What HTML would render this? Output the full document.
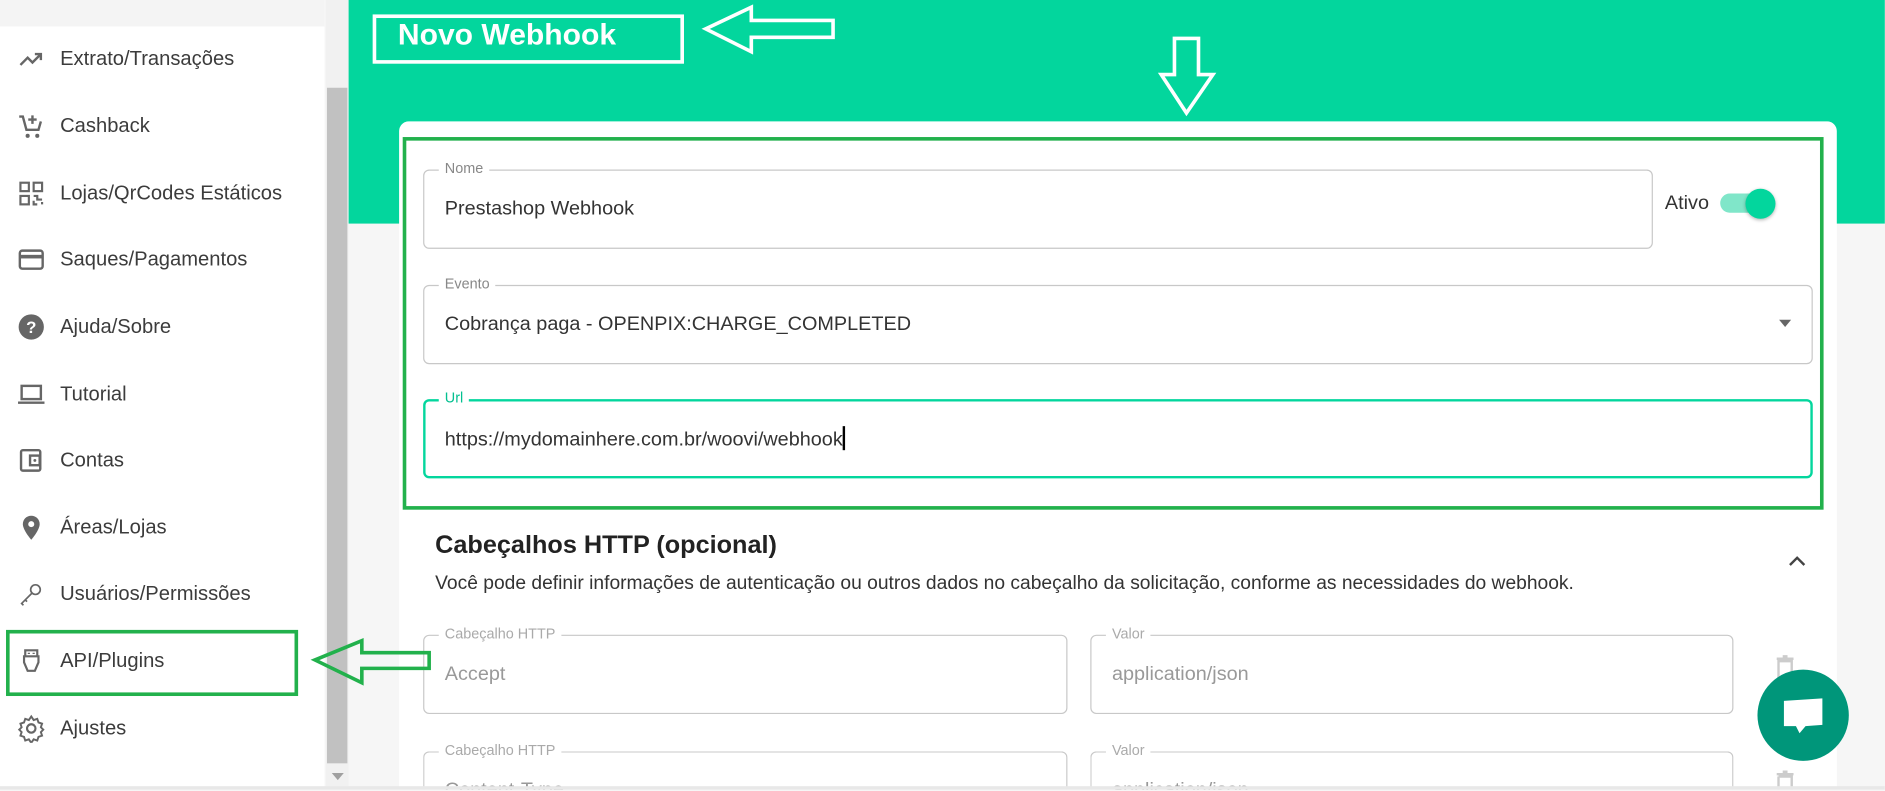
<!DOCTYPE html>
<html><head><meta charset="utf-8"><style>
*{box-sizing:border-box;margin:0;padding:0}
html,body{width:1885px;height:791px;overflow:hidden;background:#f6f6f6;font-family:"Liberation Sans",sans-serif}
#w{position:absolute;left:0;top:0;width:1568px;height:657px;overflow:hidden;transform:scale(1.2021);transform-origin:0 0;background:#f6f6f6}
.a{position:absolute}
.side{left:0;top:0;width:270px;height:657px;background:#fff}
.item{position:absolute;left:50px;font-size:16.8px;color:#3c3c3c;transform:translateY(-50%)}
.ic{position:absolute;left:14px;width:24px;height:24px;transform:translateY(-50%)}
.fld{position:absolute;border:1px solid #c8c8c8;border-radius:5px;background:#fff}
.lab{position:absolute;top:-9px;left:12px;background:#fff;padding:0 5px;font-size:12px;color:#888}
.val{position:absolute;left:17px;top:50%;transform:translateY(-50%);font-size:16.5px;color:#333}
.ph{color:#999}
</style></head><body><div id="w">
<div class="a side"></div>
<div class="a" style="left:0;top:0;width:270px;height:22px;background:#f4f4f4"></div>
<div class="a" style="left:271px;top:0;width:19px;height:654px;background:#f1f1f1"></div>
<div class="a" style="left:272px;top:73px;width:17px;height:562px;background:#c1c1c1"></div>
<div class="a" style="left:276px;top:643px;width:0;height:0;border-left:5px solid transparent;border-right:5px solid transparent;border-top:6px solid #a0a0a0"></div>

<svg class="ic" style="top:49px" viewBox="0 0 24 24"><path d="M3 17l6-6 4 4 7-7M15 8h5v5" fill="none" stroke="#666" stroke-width="2"/></svg>
<svg class="ic" style="top:105px" viewBox="0 0 24 24"><path d="M2 4h3l3 11h10l2-7" fill="none" stroke="#666" stroke-width="2"/><path d="M13 3v7M9.5 6.5h7" stroke="#666" stroke-width="2"/><circle cx="9" cy="20" r="1.7" fill="#666"/><circle cx="17" cy="20" r="1.7" fill="#666"/></svg>
<svg class="ic" style="top:161px" viewBox="0 0 24 24" fill="none" stroke="#666" stroke-width="1.8"><rect x="3" y="3" width="7" height="7"/><rect x="14" y="3" width="7" height="7"/><rect x="3" y="14" width="7" height="7"/><path d="M14 14h3v3h4M14 18v3h3M21 19v2"/></svg>
<svg class="ic" style="top:216px" viewBox="0 0 24 24"><rect x="2.5" y="4.5" width="19" height="15" rx="2" fill="none" stroke="#666" stroke-width="2"/><rect x="3" y="8" width="18" height="3" fill="#666"/></svg>
<svg class="ic" style="top:272px" viewBox="0 0 24 24"><circle cx="12" cy="12" r="10.5" fill="#666"/><text x="12" y="17" font-size="14" font-weight="bold" fill="#fff" text-anchor="middle" font-family="Liberation Sans">?</text></svg>
<svg class="ic" style="top:328px" viewBox="0 0 24 24"><rect x="4" y="5" width="16" height="11" fill="none" stroke="#666" stroke-width="2"/><path d="M1 19h22" stroke="#666" stroke-width="2"/></svg>
<svg class="ic" style="top:383px" viewBox="0 0 24 24"><rect x="3.5" y="3.5" width="16" height="17" rx="1.5" fill="none" stroke="#666" stroke-width="2"/><rect x="11" y="8" width="8" height="8" fill="none" stroke="#666" stroke-width="2"/><circle cx="15" cy="12" r="1.2" fill="#666"/></svg>
<svg class="ic" style="top:439px" viewBox="0 0 24 24"><path d="M12 2a7 7 0 0 0-7 7c0 5 7 13 7 13s7-8 7-13a7 7 0 0 0-7-7z" fill="#666"/><circle cx="12" cy="9" r="2.5" fill="#fff"/></svg>
<svg class="ic" style="top:494px" viewBox="0 0 24 24" fill="none" stroke="#666" stroke-width="1.4"><circle cx="15.5" cy="8.5" r="4"/><path d="M12.5 11.5L4 20l1.5 1.5M7 17l1.5 1.5"/></svg>
<svg class="ic" style="top:550px" viewBox="0 0 24 24" fill="none" stroke="#666" stroke-width="1.8"><path d="M7 3h10v5H7zM6 8h12v5l-3 7H9l-3-7z"/><path d="M10 5v1M14 5v1"/></svg>
<svg class="ic" style="top:606px" viewBox="0 0 24 24"><circle cx="12" cy="12" r="3.5" fill="none" stroke="#666" stroke-width="1.8"/><path d="M12 2l2 3 3-1 1 3 3 1-1 3 2 2-2 2 1 3-3 1-1 3-3-1-2 3-2-3-3 1-1-3-3-1 1-3-2-2 2-2-1-3 3-1 1-3 3 1z" fill="none" stroke="#666" stroke-width="1.6"/></svg>

<div class="item" style="top:49px">Extrato/Transações</div>
<div class="item" style="top:105px">Cashback</div>
<div class="item" style="top:161px">Lojas/QrCodes Estáticos</div>
<div class="item" style="top:216px">Saques/Pagamentos</div>
<div class="item" style="top:272px">Ajuda/Sobre</div>
<div class="item" style="top:328px">Tutorial</div>
<div class="item" style="top:383px">Contas</div>
<div class="item" style="top:439px">Áreas/Lojas</div>
<div class="item" style="top:494px">Usuários/Permissões</div>
<div class="item" style="top:550px">API/Plugins</div>
<div class="item" style="top:606px">Ajustes</div>
<div class="a" style="left:5px;top:524px;width:243px;height:55px;border:3px solid #22b14c"></div>

<div class="a" style="left:290px;top:0;width:1278px;height:186px;background:#03d69d"></div>
<div class="a" style="left:310px;top:12px;width:259px;height:41px;border:3px solid #fff"></div>
<div class="a" style="left:331px;top:15px;font-size:25px;font-weight:bold;color:#fff">Novo Webhook</div>
<svg class="a" style="left:582px;top:2px" width="118" height="44" viewBox="0 0 118 44"><path d="M5 22L43 4v11h68v14H43v12z" fill="none" stroke="#fff" stroke-width="3"/></svg>
<svg class="a" style="left:962px;top:30px" width="52" height="68" viewBox="0 0 52 68"><path d="M15 2h20v30h12L25 64 4 32h11z" fill="none" stroke="#fff" stroke-width="3"/></svg>

<div class="a" style="left:332px;top:101px;width:1196px;height:556px;background:#fff;border-radius:8px 8px 0 0"></div>
<div class="a" style="left:335px;top:114px;width:1182px;height:310px;border:3px solid #22b14c"></div>

<div class="fld" style="left:352px;top:141px;width:1023px;height:66px"><span class="lab">Nome</span><span class="val">Prestashop Webhook</span></div>
<div class="a" style="left:1385px;top:160px;font-size:16.5px;color:#333">Ativo</div>
<div class="a" style="left:1431px;top:161px;width:40px;height:16px;border-radius:8px;background:#80e6c9"></div>
<div class="a" style="left:1452px;top:157px;width:25px;height:25px;border-radius:50%;background:#03d69d;box-shadow:0 1px 3px rgba(0,0,0,.3)"></div>

<div class="fld" style="left:352px;top:237px;width:1156px;height:66px"><span class="lab">Evento</span><span class="val">Cobrança paga - OPENPIX:CHARGE_COMPLETED</span>
<div class="a" style="right:17px;top:28px;border-left:5px solid transparent;border-right:5px solid transparent;border-top:6px solid #666"></div></div>

<div class="fld" style="left:352px;top:332px;width:1156px;height:66px;border:2px solid #03d69d"><span class="lab" style="color:#03c090;top:-10px;left:11px">Url</span><span class="val" style="left:16px">https://mydomainhere.com.br/woovi/webhook<span style="display:inline-block;width:1.5px;height:20px;background:#000;vertical-align:-4px"></span></span></div>

<div class="a" style="left:362px;top:442px;font-size:21px;font-weight:bold;color:#222">Cabeçalhos HTTP (opcional)</div>
<svg class="a" style="left:1487px;top:461px" width="16" height="12" viewBox="0 0 16 12"><path d="M2 9l6-6 6 6" fill="none" stroke="#444" stroke-width="2"/></svg>
<div class="a" style="left:362px;top:477px;font-size:16px;color:#333">Você pode definir informações de autenticação ou outros dados no cabeçalho da solicitação, conforme as necessidades do webhook.</div>

<div class="fld" style="left:352px;top:528px;width:536px;height:66px"><span class="lab" style="color:#aaa">Cabeçalho HTTP</span><span class="val ph">Accept</span></div>
<div class="fld" style="left:907px;top:528px;width:535px;height:66px"><span class="lab" style="color:#aaa">Valor</span><span class="val ph">application/json</span></div>
<div class="fld" style="left:352px;top:625px;width:536px;height:32px;border-bottom:none;border-radius:5px 5px 0 0"><span class="lab" style="color:#aaa">Cabeçalho HTTP</span><span class="val ph" style="top:22px;transform:none">Content-Type</span></div>
<div class="fld" style="left:907px;top:625px;width:535px;height:32px;border-bottom:none;border-radius:5px 5px 0 0"><span class="lab" style="color:#aaa">Valor</span><span class="val ph" style="top:22px;transform:none">application/json</span></div>
<svg class="a" style="left:1476px;top:544px" width="18" height="24" viewBox="0 0 18 24"><path d="M2 4h14M7 2h4M3.5 6h11v17h-11z" fill="none" stroke="#ccc" stroke-width="2"/></svg>
<svg class="a" style="left:1476px;top:640px" width="18" height="17" viewBox="0 0 18 17"><path d="M2 4h14M7 2h4M3.5 6h11v11M3.5 6v11" fill="none" stroke="#ccc" stroke-width="2"/></svg>

<svg class="a" style="left:258px;top:528px;z-index:5" width="104" height="44" viewBox="0 0 104 44"><path d="M4 21L43 5v10h56v13H43v12z" fill="none" stroke="#22b14c" stroke-width="3"/></svg>

<div class="a" style="left:1462px;top:557px;width:76px;height:76px;border-radius:50%;background:#00967a"></div>
<svg class="a" style="left:1480px;top:575px" width="40" height="40" viewBox="0 0 40 40"><path d="M4 8l32-2v22l-14 1-5 6-3-6-10 0z" fill="#fff"/></svg>
<div class="a" style="left:0;top:654px;width:1568px;height:3px;background:#e8e8e8;z-index:6"></div>
</div></body></html>
